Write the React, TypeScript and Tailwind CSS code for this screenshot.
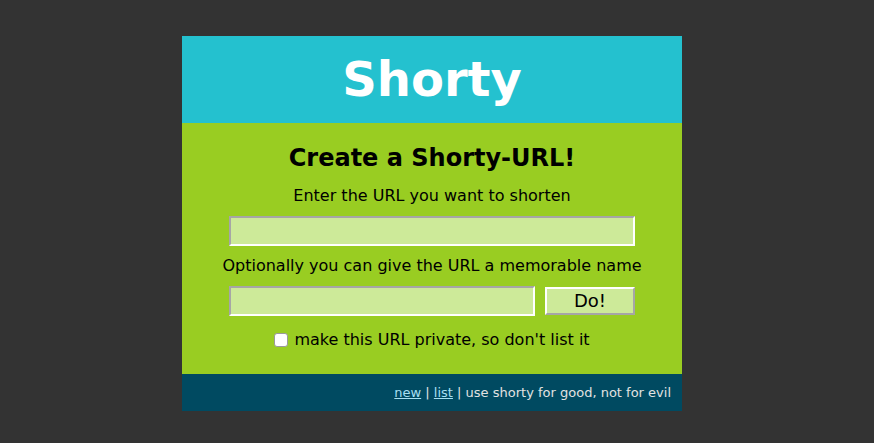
import { useState } from "react";

export default function App() {
  const [url, setUrl] = useState("");
  const [name, setName] = useState("");
  const [priv, setPriv] = useState(false);

  return (
    <div className="min-h-screen bg-[#333333] pt-[36px] pr-[10px] font-['DejaVu_Sans',sans-serif]">
      <div className="mx-auto w-[500px]">
        {/* Header */}
        <div className="h-[87px] bg-[#24c1cf] text-center text-[48px] font-bold leading-[87px] text-white">
          Shorty
        </div>

        {/* Form */}
        <form
          onSubmit={(e) => e.preventDefault()}
          className="flex flex-col items-center bg-[#99cd22] pt-[21px] pb-[22px] text-black"
        >
          <h2 className="text-[24px] font-bold leading-[28px]">
            Create a Shorty-URL!
          </h2>
          <p className="mt-3 text-[16px] leading-6">
            Enter the URL you want to shorten
          </p>
          <input
            type="text"
            value={url}
            onChange={(e) => setUrl(e.target.value)}
            className="mt-2 h-[30px] w-[406px] border-2 border-solid border-t-[#a6a6a6] border-l-[#a6a6a6] border-b-white border-r-white bg-[#cdea99] px-1 text-[16px] outline-none"
          />
          <p className="mt-2 text-[16px] leading-6">
            Optionally you can give the URL a memorable name
          </p>
          <div className="mt-2 flex w-[406px] gap-[10px]">
            <input
              type="text"
              value={name}
              onChange={(e) => setName(e.target.value)}
              className="h-[30px] w-[306px] border-2 border-solid border-t-[#a6a6a6] border-l-[#a6a6a6] border-b-white border-r-white bg-[#cdea99] px-1 text-[16px] outline-none"
            />
            <button
              type="submit"
              className="mt-px h-[28px] w-[90px] border-2 border-solid border-t-white border-l-white border-b-[#a6a6a6] border-r-[#a6a6a6] bg-[#cdea99] text-[18px] leading-[24px] text-black"
            >
              Do!
            </button>
          </div>
          <label className="mt-3 flex items-center gap-[6px] text-[16px] leading-6">
            <input
              type="checkbox"
              checked={priv}
              onChange={(e) => setPriv(e.target.checked)}
              className="h-[14px] w-[14px] appearance-none rounded-[3px] border border-[#9a9a9a] bg-white checked:bg-[#2563eb]"
            />
            make this URL private, so don't list it
          </label>
        </form>

        {/* Footer */}
        <div className="h-[37px] bg-[#004a61] pr-[11px] text-right text-[13px] leading-[37px] text-[#e2e2e2]">
          <a href="#" className="text-[#a6dff2] underline">
            new
          </a>{" "}
          |{" "}
          <a href="#" className="text-[#a6dff2] underline">
            list
          </a>{" "}
          | use shorty for good, not for evil
        </div>
      </div>
    </div>
  );
}
